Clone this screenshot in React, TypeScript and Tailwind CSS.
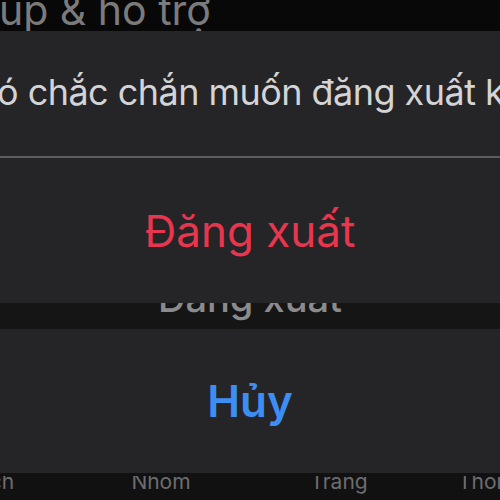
const font = { fontFamily: "Inter, 'Noto Sans', sans-serif" };

export default function App() {
    return (
        <div className="w-[500px] h-[500px] overflow-hidden bg-[#080808] flex flex-col" style={font}>
            {/* page header behind the sheet */}
            <div className="h-[31px] shrink-0 overflow-hidden bg-[#080808]">
                <p className="whitespace-nowrap text-[41px] leading-none text-[#7b7b7d] ml-[-111px] mt-[-10px]">
                    Trợ giúp &amp; hỗ trợ
                </p>
            </div>

            {/* action sheet group */}
            <div className="h-[272px] shrink-0 bg-[#252527] flex flex-col">
                <div className="h-[125px] shrink-0 flex items-center overflow-hidden pb-[4px]">
                    <p className="whitespace-nowrap text-[36px] tracking-[-0.015em] text-[#d4d4d6] ml-[-96px]">
                        Bạn có chắc chắn muốn đăng xuất không?
                    </p>
                </div>
                <div className="h-[2px] shrink-0 bg-[#5c5c5f]" />
                <button className="flex-1 flex items-center justify-center text-[44px] text-[#e8364f]">
                    Đăng xuất
                </button>
            </div>

            {/* menu row peeking through */}
            <div className="h-[26px] shrink-0 bg-[#151516] overflow-hidden flex justify-center">
                <span className="whitespace-nowrap text-[38px] leading-none font-medium text-[#8b8b8d] mt-[-24px]">
                    Đăng xuất
                </span>
            </div>

            {/* cancel */}
            <button className="h-[144px] shrink-0 bg-[#252527] flex items-center justify-center text-[44px] font-semibold text-[#3d8ef2]">
                Hủy
            </button>

            {/* tab bar behind */}
            <div className="flex-1 bg-[#111112] pt-[3px]">
                <div className="h-[24px] overflow-hidden">
                    <div className="flex whitespace-nowrap text-[21px] leading-none text-[#6d6d6f] mt-[-5px] ml-[-106px]">
                        <span className="w-[178px] shrink-0 text-center">Watch</span>
                        <span className="w-[178px] shrink-0 text-center">Nhóm</span>
                        <span className="w-[178px] shrink-0 text-center">Trang</span>
                        <span className="shrink-0 ml-[30px]">Thông báo</span>
                    </div>
                </div>
            </div>
        </div>
    );
}
